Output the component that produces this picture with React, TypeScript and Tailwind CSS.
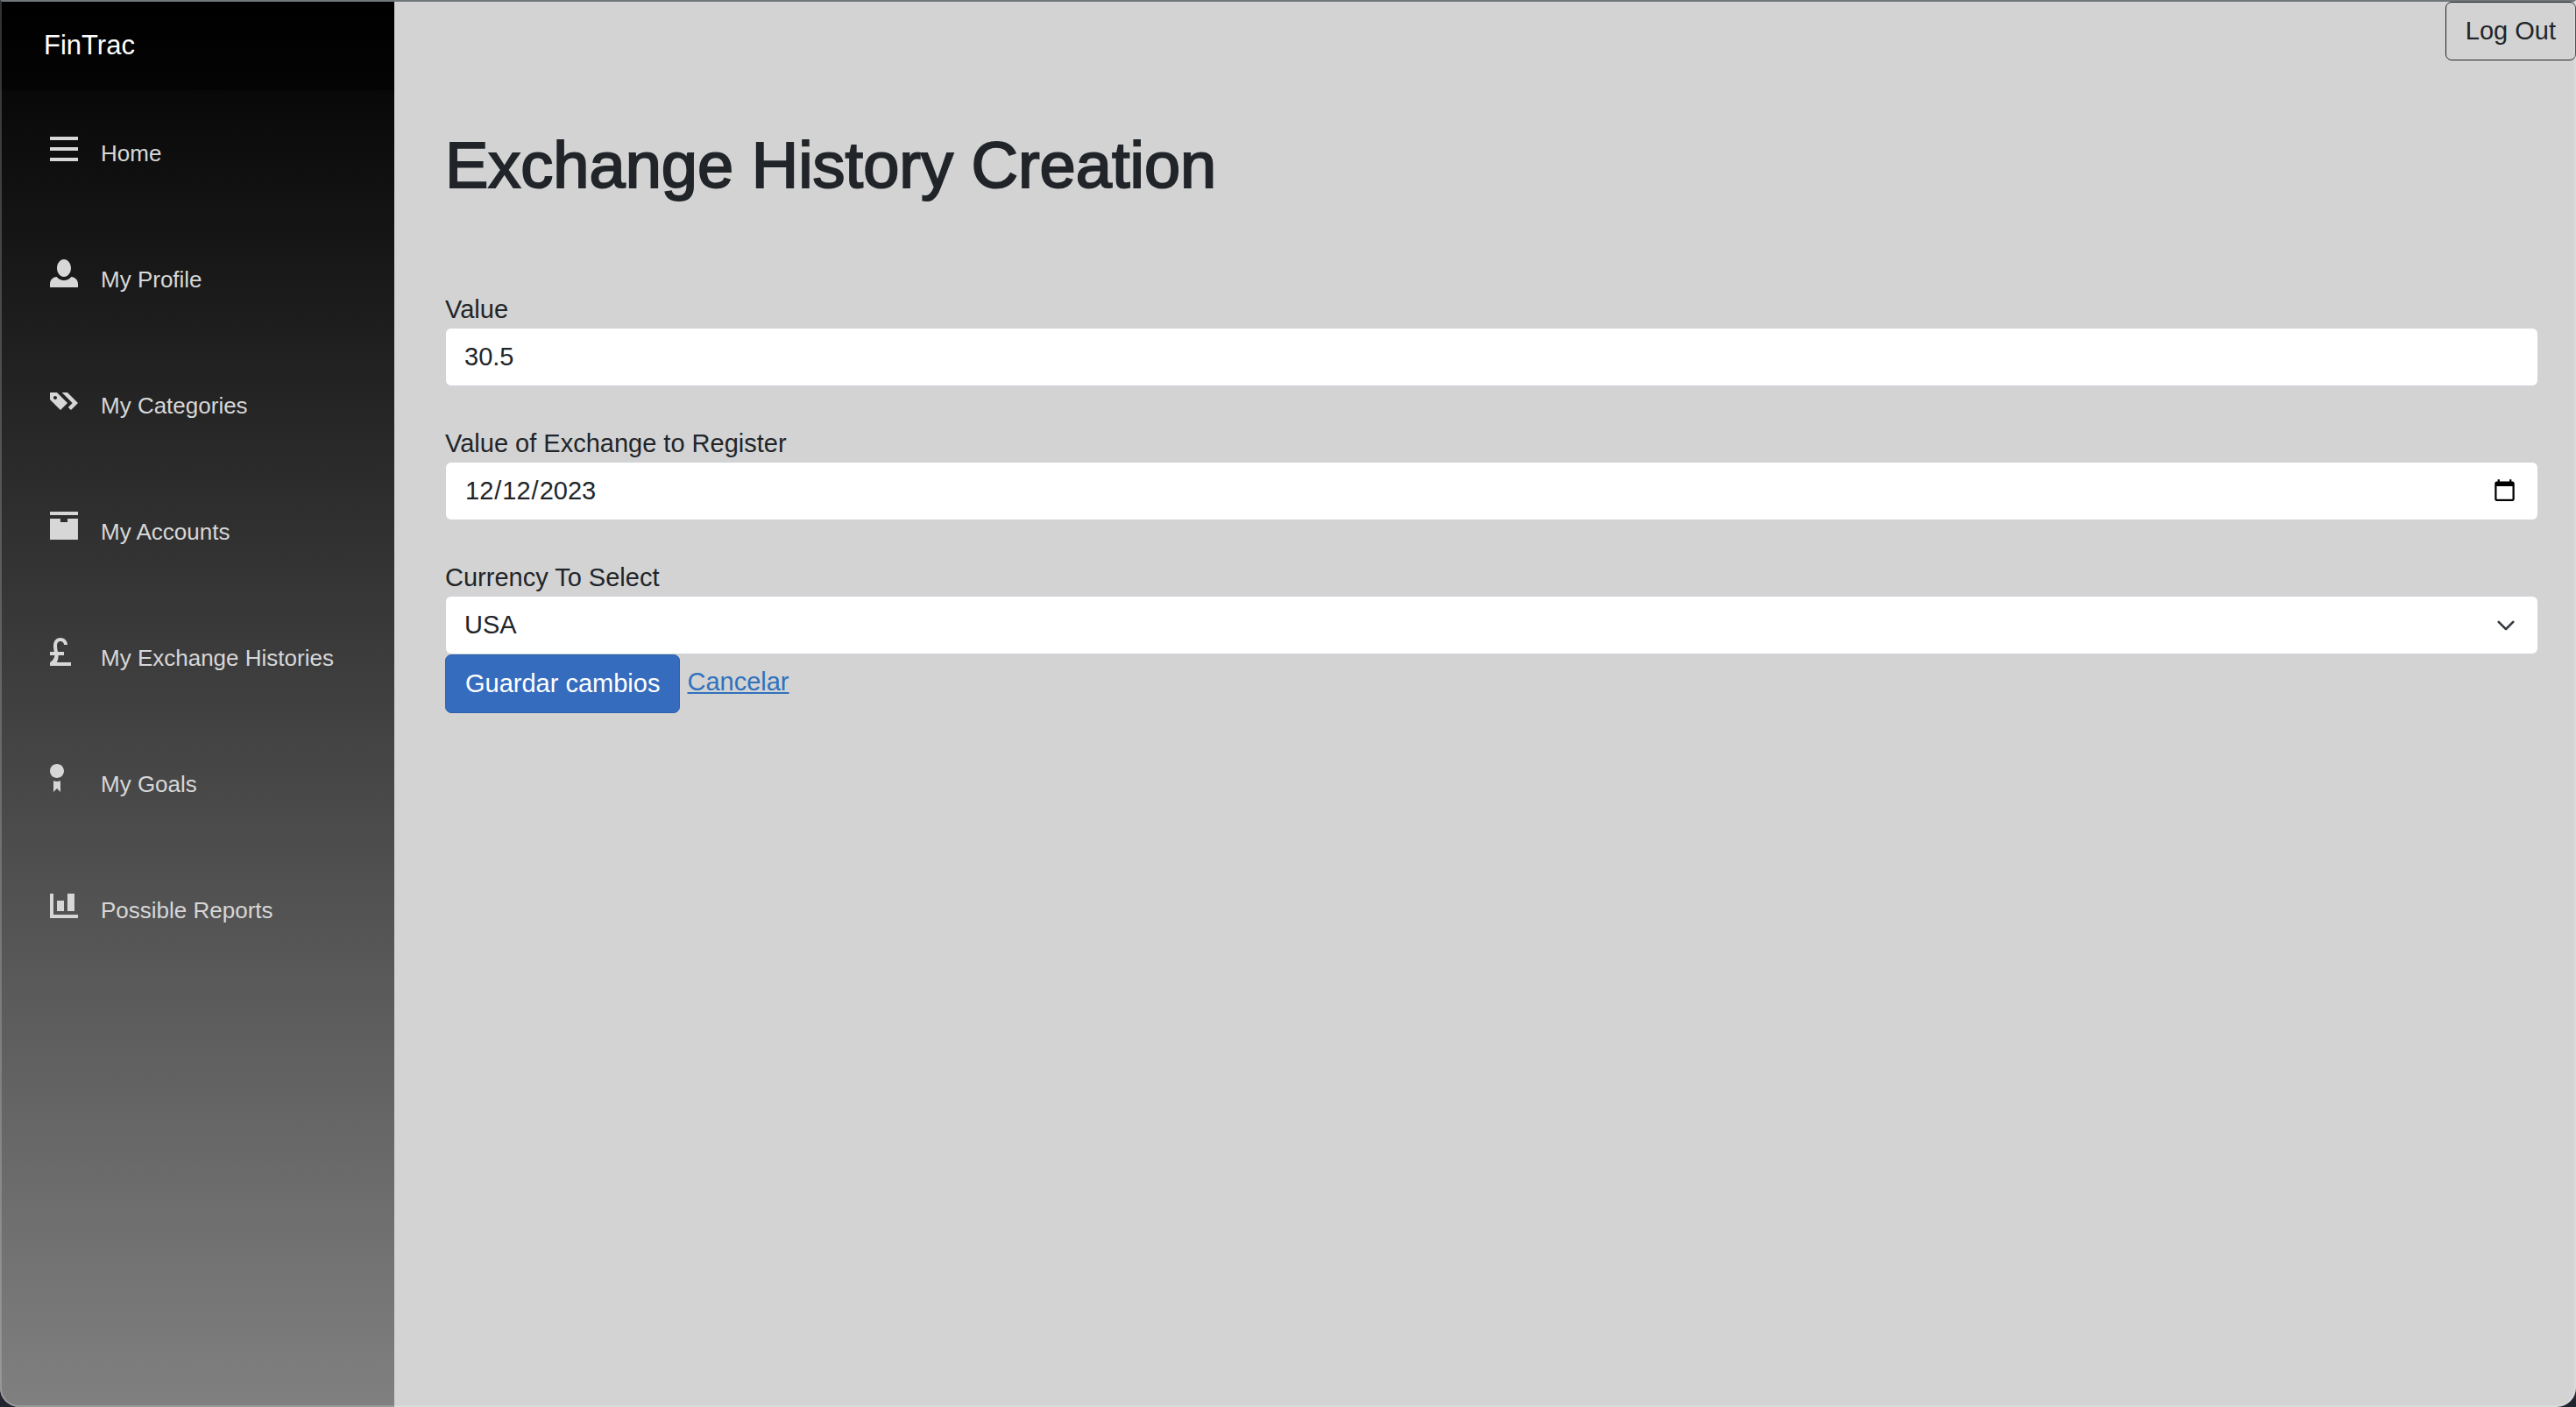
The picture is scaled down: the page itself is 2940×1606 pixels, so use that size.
import React from "react";

type NavItem = { label: string; shape: React.ReactNode };

const navItems: NavItem[] = [
  {
    label: "Home",
    shape: <path d="M0 1v1h8v-1h-8zm0 2.97v1h8v-1h-8zm0 3v1h8v-1h-8z" />,
  },
  {
    label: "My Profile",
    shape: (
      <path d="M4 0c-1.1 0-2 1.12-2 2.5s.9 2.5 2 2.5 2-1.12 2-2.5-.9-2.5-2-2.5zm-2.09 5c-1.06.05-1.91.92-1.91 2v1h8v-1c0-1.08-.84-1.95-1.91-2-.54.61-1.28 1-2.09 1-.81 0-1.55-.39-2.09-1z" />
    ),
  },
  {
    label: "My Categories",
    shape: (
      <path d="M0 2v2l3 3 1.5-1.5.5-.5-2-2-1-1h-2zm3.41 0l3 3-1.19 1.22.78.78 2-2-3-3h-1.59zm-1.91 1c.28 0 .5.22.5.5s-.22.5-.5.5-.5-.22-.5-.5.22-.5.5-.5z" />
    ),
  },
  {
    label: "My Accounts",
    shape: (
      <path d="M0 0v1h8v-1h-8zm0 2v5.91c0 .05.04.09.09.09h7.81c.05 0 .09-.04.09-.09v-5.91h-2.97v1.03h-2.03v-1.03h-2.97z" />
    ),
  },
  {
    label: "My Exchange Histories",
    shape: (
      <path d="M3 0c-.64 0-1.16.27-1.5.69-.34.43-.5.98-.5 1.56 0 .7.1 1.25.22 1.75h-1.22v1h1.34c-.02.69-.36 1.37-1.25 2.03l-.09.06v.91h6v-1h-4.03c.33-.64.45-1.34.43-2h1.6v-1h-1.76c-.12-.56-.24-1.11-.24-1.75 0-.4.11-.73.28-.94.17-.21.37-.31.72-.31.31 0 .55.1.72.31.17.21.28.34.28.69h1c0-.58-.16-.88-.5-1.31-.34-.43-.86-.69-1.5-.69z" />
    ),
  },
  {
    label: "My Goals",
    shape: (
      <path d="M2 0c-1.11 0-2 .89-2 2s.89 2 2 2 2-.89 2-2-.89-2-2-2zm-1 4.81v3.19l1-1 1 1v-3.19c-.31.11-.65.19-1 .19s-.69-.08-1-.19z" />
    ),
  },
  {
    label: "Possible Reports",
    shape: <path d="M0 1v7h8v-1h-7v-6h-1zm5 0v5h2v-5h-2zm-3 2v3h2v-3h-2z" />,
  },
];

const control =
  "block h-[67px] w-full appearance-none rounded-[7px] border border-[#ced4da] bg-white px-[21px] text-[29px] leading-[43px] text-[#212529] outline-none";

function Sidebar() {
  return (
    <aside className="w-[450px] shrink-0 bg-linear-to-b/srgb from-black to-[#808080]">
      <div className="flex h-[103px] items-center bg-black/40 pl-[50px]">
        <a href="#home" className="text-[31px] leading-[48px] text-white">
          FinTrac
        </a>
      </div>
      <nav className="mt-[29px] flex flex-col gap-[58px]">
        {navItems.map((item) => (
          <a
            key={item.label}
            href="#"
            className="flex h-[86px] items-baseline gap-[26px] pl-[57px] text-[26px] leading-[86px] text-[#d7d7d7]"
          >
            <svg viewBox="0 0 8 8" className="size-8 shrink-0 fill-current" aria-hidden="true">
              {item.shape}
            </svg>
            {item.label}
          </a>
        ))}
      </nav>
    </aside>
  );
}

function Field({ id, label, children }: { id: string; label: string; children: React.ReactNode }) {
  return (
    <div>
      <label htmlFor={id} className="block h-[43px] text-[29px] leading-[45px]">
        {label}
      </label>
      {children}
    </div>
  );
}

export default function App() {
  return (
    <div className="min-h-screen bg-[#22252f]">
      <div className="relative flex min-h-screen overflow-hidden rounded-b-[22px] bg-[#d3d3d3] font-['Liberation_Sans',Arial,sans-serif] text-[#212529]">
        <Sidebar />
        <main className="min-w-0 flex-1 pt-0.5">
          <div className="flex justify-end">
            <button
              type="button"
              className="h-[67px] rounded-[7px] border border-[#212529] px-[22px] text-[29px] leading-[43px]"
            >
              Log Out
            </button>
          </div>
          <div className="pt-[77px] pr-[43px] pl-[58px]">
            <h1 className="text-[74px] leading-[86px] font-medium [-webkit-text-stroke:2px_#212529]">
              Exchange History Creation
            </h1>
            <form className="mt-[99px]" onSubmit={(e) => e.preventDefault()}>
              <div className="flex flex-col gap-[43px]">
                <Field id="value" label="Value">
                  <input id="value" type="text" defaultValue="30.5" className={control} />
                </Field>
                <Field id="date" label="Value of Exchange to Register">
                  <input id="date" type="date" defaultValue="2023-12-12" className={control} />
                </Field>
                <Field id="currency" label="Currency To Select">
                  <div className="relative">
                    <select id="currency" defaultValue="USA" className={control}>
                      <option>USA</option>
                    </select>
                    <svg
                      viewBox="0 0 16 16"
                      className="pointer-events-none absolute top-1/2 right-[26px] size-[22px] -translate-y-1/2 fill-none stroke-[#343a40] stroke-2"
                      strokeLinecap="round"
                      strokeLinejoin="round"
                      aria-hidden="true"
                    >
                      <path d="m2 5 6 6 6-6" />
                    </svg>
                  </div>
                </Field>
              </div>
              <div className="flex items-start gap-2">
                <button
                  type="submit"
                  className="h-[67px] rounded-[7px] border border-[#3061a9] bg-[#366cbe] px-[22px] text-[29px] leading-[43px] text-white"
                >
                  Guardar cambios
                </button>
                <a
                  href="#cancel"
                  className="pt-[10px] text-[29px] leading-[43px] text-[#3071bd] underline decoration-2 underline-offset-2"
                >
                  Cancelar
                </a>
              </div>
            </form>
          </div>
        </main>
        <div className="pointer-events-none absolute inset-0 rounded-b-[22px] border-x-2 border-t-2 border-b-2 border-x-white/20 border-t-[#70767a] border-b-white/20" />
      </div>
    </div>
  );
}
